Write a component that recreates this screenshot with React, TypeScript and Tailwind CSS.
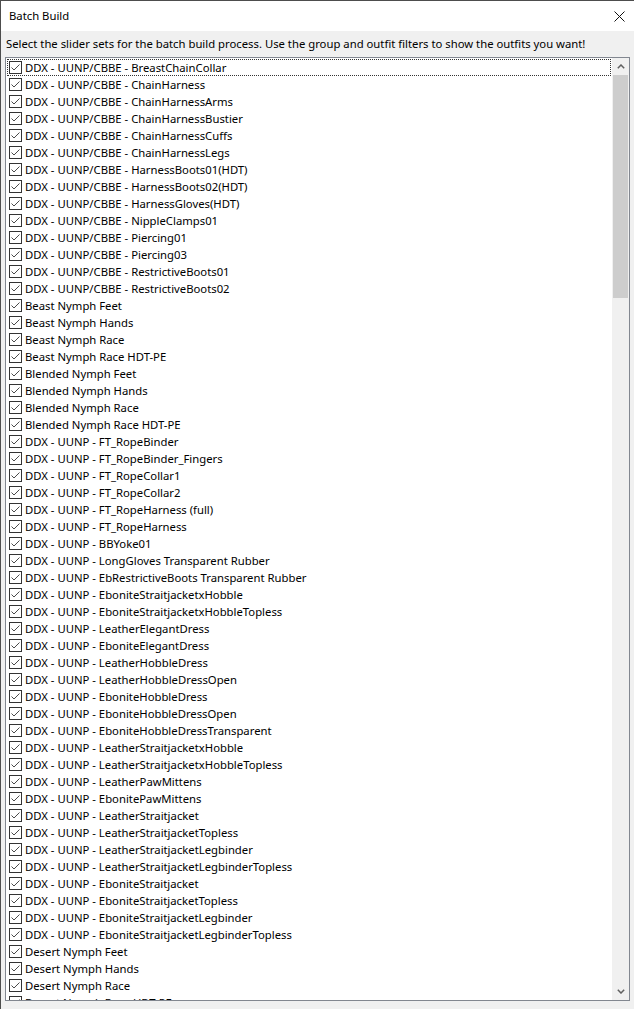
import { useState } from 'react';

const outfits = [
    'DDX - UUNP/CBBE - BreastChainCollar',
    'DDX - UUNP/CBBE - ChainHarness',
    'DDX - UUNP/CBBE - ChainHarnessArms',
    'DDX - UUNP/CBBE - ChainHarnessBustier',
    'DDX - UUNP/CBBE - ChainHarnessCuffs',
    'DDX - UUNP/CBBE - ChainHarnessLegs',
    'DDX - UUNP/CBBE - HarnessBoots01(HDT)',
    'DDX - UUNP/CBBE - HarnessBoots02(HDT)',
    'DDX - UUNP/CBBE - HarnessGloves(HDT)',
    'DDX - UUNP/CBBE - NippleClamps01',
    'DDX - UUNP/CBBE - Piercing01',
    'DDX - UUNP/CBBE - Piercing03',
    'DDX - UUNP/CBBE - RestrictiveBoots01',
    'DDX - UUNP/CBBE - RestrictiveBoots02',
    'Beast Nymph Feet',
    'Beast Nymph Hands',
    'Beast Nymph Race',
    'Beast Nymph Race HDT-PE',
    'Blended Nymph Feet',
    'Blended Nymph Hands',
    'Blended Nymph Race',
    'Blended Nymph Race HDT-PE',
    'DDX - UUNP - FT_RopeBinder',
    'DDX - UUNP - FT_RopeBinder_Fingers',
    'DDX - UUNP - FT_RopeCollar1',
    'DDX - UUNP - FT_RopeCollar2',
    'DDX - UUNP - FT_RopeHarness (full)',
    'DDX - UUNP - FT_RopeHarness',
    'DDX - UUNP - BBYoke01',
    'DDX - UUNP - LongGloves Transparent Rubber',
    'DDX - UUNP - EbRestrictiveBoots Transparent Rubber',
    'DDX - UUNP - EboniteStraitjacketxHobble',
    'DDX - UUNP - EboniteStraitjacketxHobbleTopless',
    'DDX - UUNP - LeatherElegantDress',
    'DDX - UUNP - EboniteElegantDress',
    'DDX - UUNP - LeatherHobbleDress',
    'DDX - UUNP - LeatherHobbleDressOpen',
    'DDX - UUNP - EboniteHobbleDress',
    'DDX - UUNP - EboniteHobbleDressOpen',
    'DDX - UUNP - EboniteHobbleDressTransparent',
    'DDX - UUNP - LeatherStraitjacketxHobble',
    'DDX - UUNP - LeatherStraitjacketxHobbleTopless',
    'DDX - UUNP - LeatherPawMittens',
    'DDX - UUNP - EbonitePawMittens',
    'DDX - UUNP - LeatherStraitjacket',
    'DDX - UUNP - LeatherStraitjacketTopless',
    'DDX - UUNP - LeatherStraitjacketLegbinder',
    'DDX - UUNP - LeatherStraitjacketLegbinderTopless',
    'DDX - UUNP - EboniteStraitjacket',
    'DDX - UUNP - EboniteStraitjacketTopless',
    'DDX - UUNP - EboniteStraitjacketLegbinder',
    'DDX - UUNP - EboniteStraitjacketLegbinderTopless',
    'Desert Nymph Feet',
    'Desert Nymph Hands',
    'Desert Nymph Race',
    'Desert Nymph Race HDT-PE',
];

function CheckBox({ checked }: { checked: boolean }) {
    return (
        <span className="w-[13px] h-[13px] shrink-0 border border-[#333333] bg-white flex items-center justify-center">
            {checked && (
                <svg width="11" height="11" viewBox="0 0 11 11">
                    <polyline points="1.5,5.5 4,8 9.5,2.5" fill="none" stroke="#4a4a4a" strokeWidth="1" />
                </svg>
            )}
        </span>
    );
}

function Chevron({ up }: { up?: boolean }) {
    return (
        <svg width="8" height="5" viewBox="0 0 8 5">
            <polyline
                points={up ? '0.8,4.2 4,1 7.2,4.2' : '0.8,0.8 4,4 7.2,0.8'}
                fill="none"
                stroke="#606060"
                strokeWidth="1.5"
            />
        </svg>
    );
}

export default function App() {
    const [checked, setChecked] = useState<boolean[]>(() => outfits.map(() => true));

    const toggle = (i: number) => {
        setChecked(prev => prev.map((c, idx) => (idx === i ? !c : c)));
    };

    return (
        <div className="w-[634px] h-[1009px] overflow-hidden bg-[#f0f0f0] border-l border-t border-[#4d4d4d] flex flex-col text-[11.3px] text-black font-['Noto_Sans',sans-serif]">
            {/* Title bar */}
            <div className="h-[30px] shrink-0 bg-white flex items-center justify-between pl-[8px] pr-[9px]">
                <span>Batch Build</span>
                <svg width="11" height="11" viewBox="0 0 11 11">
                    <path d="M0.5 0.5 L10.5 10.5 M10.5 0.5 L0.5 10.5" stroke="#111111" strokeWidth="1" />
                </svg>
            </div>

            <p className="h-[26px] shrink-0 flex items-center pl-[5px]">
                Select the slider sets for the batch build process. Use the group and outfit filters to show the outfits you want!
            </p>

            {/* Outfit list */}
            <div className="mx-[4px] h-[944px] shrink-0 border border-[#828790] bg-white flex">
                <div className="flex-1 overflow-hidden pt-px px-px">
                    {outfits.map((name, i) => (
                        <div
                            key={name}
                            onClick={() => toggle(i)}
                            className={`h-[17px] flex items-center gap-[3px] pl-[1px] border border-dotted ${i === 0 ? 'border-[#333333]' : 'border-transparent'}`}
                        >
                            <CheckBox checked={checked[i]} />
                            <span className="whitespace-nowrap leading-none">{name}</span>
                        </div>
                    ))}
                </div>

                {/* Scrollbar */}
                <div className="w-[17px] shrink-0 bg-[#f0f0f0] flex flex-col">
                    <div className="h-[17px] flex items-center justify-center">
                        <Chevron up />
                    </div>
                    <div className="h-[223px] mx-px bg-[#cdcdcd]" />
                    <div className="flex-1" />
                    <div className="h-[17px] flex items-center justify-center">
                        <Chevron />
                    </div>
                </div>
            </div>
        </div>
    );
}
